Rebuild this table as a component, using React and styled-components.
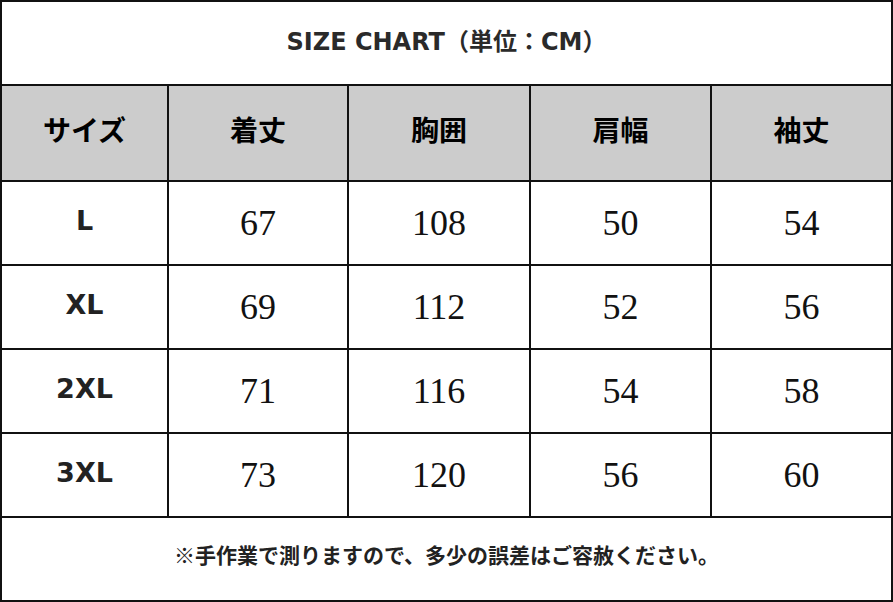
import React from "react";
import styled, { createGlobalStyle } from "styled-components";

const GlobalStyle = createGlobalStyle`
    html, body {
        margin: 0;
        padding: 0;
        background: #fff;
    }
`;

const Chart = styled.div`
    display: grid;
    grid-template-columns: 165px 178px 180px 179px 179px;
    grid-template-rows: 82px 94px repeat(4, 82px) 82px;
    gap: 2px;
    padding: 2px;
    width: max-content;
    background: #111;
`;

const Cell = styled.div`
    display: flex;
    align-items: center;
    justify-content: center;
    background: ${props => props.head ? "#cccccc" : "#fff"};
    grid-column: ${props => props.wide ? "1 / -1" : "auto"};
    color: #1a1a1a;
`;

const Title = styled.span`
    font-family: "DejaVu Sans", "Noto Sans CJK JP", sans-serif;
    font-weight: 700;
    font-size: 24px;
    color: #2a2a2a;
    margin-bottom: 7px;
`;

const HeadText = styled.span`
    font-family: "Noto Sans CJK JP", sans-serif;
    font-weight: 700;
    font-size: 28px;
    color: #000;
    margin-bottom: 9px;
`;

const SizeText = styled.span`
    font-family: "DejaVu Sans", "Noto Sans CJK JP", sans-serif;
    font-weight: 700;
    font-size: 27px;
    color: #222;
    margin-bottom: 5px;
`;

const Num = styled.span`
    font-family: "Liberation Serif", serif;
    font-size: 36px;
    color: #111;
`;

const Note = styled.span`
    font-family: "Noto Sans CJK JP", sans-serif;
    font-weight: 700;
    font-size: 21px;
    color: #222;
    margin-bottom: 10px;
`;

const headers = ["サイズ", "着丈", "胸囲", "肩幅", "袖丈"];

const rows = [
    ["L", 67, 108, 50, 54],
    ["XL", 69, 112, 52, 56],
    ["2XL", 71, 116, 54, 58],
    ["3XL", 73, 120, 56, 60],
];

export default function App() {
    return (
        <>
            <GlobalStyle/>
            <Chart>
                <Cell wide>
                    <Title>SIZE CHART（単位：CM）</Title>
                </Cell>
                {headers.map(h => (
                    <Cell head key={h}>
                        <HeadText>{h}</HeadText>
                    </Cell>
                ))}
                {rows.map(r => (
                    <React.Fragment key={r[0]}>
                        <Cell><SizeText>{r[0]}</SizeText></Cell>
                        {r.slice(1).map((v, i) => (
                            <Cell key={i}><Num>{v}</Num></Cell>
                        ))}
                    </React.Fragment>
                ))}
                <Cell wide>
                    <Note>※手作業で測りますので、多少の誤差はご容赦ください。</Note>
                </Cell>
            </Chart>
        </>
    );
}
